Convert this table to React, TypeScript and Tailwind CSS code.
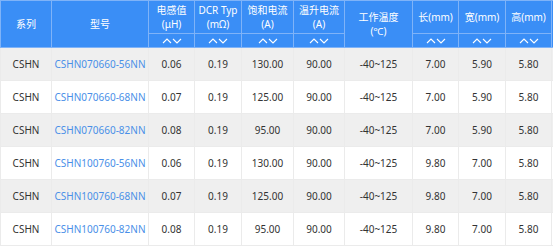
import React from 'react';

type Row = {
  series: string;
  model: string;
  l: string;
  dcr: string;
  isat: string;
  irms: string;
  temp: string;
  len: string;
  wid: string;
  hei: string;
};

const rows: Row[] = [
  { series: 'CSHN', model: 'CSHN070660-56NN', l: '0.06', dcr: '0.19', isat: '130.00', irms: '90.00', temp: '-40~125', len: '7.00', wid: '5.90', hei: '5.80' },
  { series: 'CSHN', model: 'CSHN070660-68NN', l: '0.07', dcr: '0.19', isat: '125.00', irms: '90.00', temp: '-40~125', len: '7.00', wid: '5.90', hei: '5.80' },
  { series: 'CSHN', model: 'CSHN070660-82NN', l: '0.08', dcr: '0.19', isat: '95.00', irms: '90.00', temp: '-40~125', len: '7.00', wid: '5.90', hei: '5.80' },
  { series: 'CSHN', model: 'CSHN100760-56NN', l: '0.06', dcr: '0.19', isat: '130.00', irms: '90.00', temp: '-40~125', len: '9.80', wid: '7.00', hei: '5.80' },
  { series: 'CSHN', model: 'CSHN100760-68NN', l: '0.07', dcr: '0.19', isat: '125.00', irms: '90.00', temp: '-40~125', len: '9.80', wid: '7.00', hei: '5.80' },
  { series: 'CSHN', model: 'CSHN100760-82NN', l: '0.08', dcr: '0.19', isat: '95.00', irms: '90.00', temp: '-40~125', len: '9.80', wid: '7.00', hei: '5.80' },
];

const SortArrows = () => (
  <svg width="20" height="6" viewBox="0 0 20 6" className="mx-auto block">
    <path d="M1 5 L5 1 L9 5" fill="none" stroke="white" strokeWidth="1.1" />
    <path d="M11 1 L15 5 L19 1" fill="none" stroke="white" strokeWidth="1.1" />
  </svg>
);

export default function App() {
  const th = 'border border-[#7fb3f8] font-normal text-white text-center leading-[14px] p-0 whitespace-nowrap';
  const td = 'border border-[#ebebeb] text-center h-[33px] p-0 whitespace-nowrap';

  return (
    <div
      className="w-[553px] h-[249px] bg-white overflow-hidden"
      style={{ fontFamily: '"Noto Sans", "Noto Sans CJK SC", sans-serif' }}
    >
      <table className="table-fixed border-collapse w-[561px] text-[10px]">
        <colgroup>
          <col className="w-[51px]" />
          <col className="w-[97px]" />
          <col className="w-[46px]" />
          <col className="w-[47px]" />
          <col className="w-[52px]" />
          <col className="w-[51px]" />
          <col className="w-[68px]" />
          <col className="w-[46px]" />
          <col className="w-[47px]" />
          <col className="w-[46px]" />
          <col className="w-[10px]" />
        </colgroup>
        <thead className="bg-[#3a8ef6]">
          <tr className="h-[33px]">
            <th rowSpan={2} className={th}>系列</th>
            <th rowSpan={2} className={th}>型号</th>
            <th className={th}>电感值<br />(μH)</th>
            <th className={th}>DCR Typ<br />(mΩ)</th>
            <th className={th}>饱和电流<br />(A)</th>
            <th className={th}>温升电流<br />(A)</th>
            <th rowSpan={2} className={th}>工作温度<br />(℃)</th>
            <th className={th}>长(mm)</th>
            <th className={th}>宽(mm)</th>
            <th className={th}>高(mm)</th>
            <th rowSpan={2} className={th}></th>
          </tr>
          <tr className="h-[14px]">
            {Array.from({ length: 7 }).map((_, i) => (
              <th key={i} className={th}>
                <SortArrows />
              </th>
            ))}
          </tr>
        </thead>
        <tbody className="text-[#333333]">
          {rows.map((r, i) => (
            <tr key={i} className={i % 2 === 0 ? 'bg-[#efefef]' : 'bg-white'}>
              <td className={td}>{r.series}</td>
              <td className={`${td} text-[#4a8fe8]`}>{r.model}</td>
              <td className={td}>{r.l}</td>
              <td className={td}>{r.dcr}</td>
              <td className={td}>{r.isat}</td>
              <td className={td}>{r.irms}</td>
              <td className={td}>{r.temp}</td>
              <td className={td}>{r.len}</td>
              <td className={td}>{r.wid}</td>
              <td className={td}>{r.hei}</td>
              <td className={td}></td>
            </tr>
          ))}
        </tbody>
      </table>
    </div>
  );
}
